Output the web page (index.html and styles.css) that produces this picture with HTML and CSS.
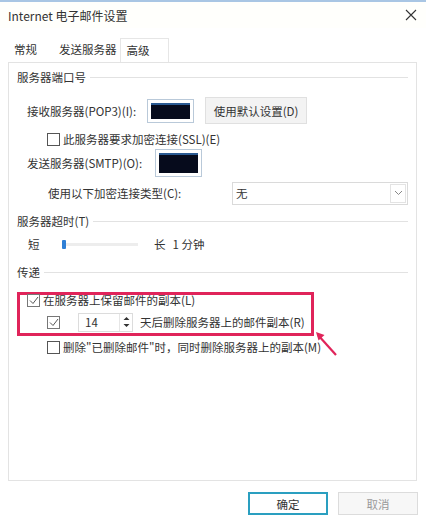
FILE: index.html
```html
<!DOCTYPE html>
<html lang="zh-CN">
<head>
    <meta charset="UTF-8">
    <title>Internet 电子邮件设置</title>
    <link rel="stylesheet" href="styles.css">
</head>
<body>
    <div class="window">
        <div class="titlebar">
            <span class="title">Internet 电子邮件设置</span>
            <svg class="close" width="12" height="12" viewBox="0 0 12 12">
                <path d="M1 1 L11 11 M11 1 L1 11" stroke="#333" stroke-width="1.1" fill="none"/>
            </svg>
        </div>

        <div class="tabs">
            <div class="tab">常规</div>
            <div class="tab">发送服务器</div>
            <div class="tab active">高级</div>
        </div>

        <div class="panel">
            <div class="group">服务器端口号</div>

            <div class="row row-pop">
                <span class="label label-pop">接收服务器(POP3)(I):</span>
                <span class="port"><span class="port-fill"></span></span>
                <button class="btn">使用默认设置(D)</button>
            </div>

            <div class="row row-ssl">
                <span class="check"></span>
                <span>此服务器要求加密连接(SSL)(E)</span>
            </div>

            <div class="row row-smtp">
                <span class="label label-smtp">发送服务器(SMTP)(O):</span>
                <span class="port port-smtp"><span class="port-fill"></span></span>
            </div>

            <div class="row row-enc">
                <span class="label label-enc">使用以下加密连接类型(C):</span>
                <div class="select">
                    <span>无</span>
                    <span class="chevron">
                        <svg width="9" height="6" viewBox="0 0 9 6"><path d="M1 1 L4.5 4.5 L8 1" stroke="#888" fill="none"/></svg>
                    </span>
                </div>
            </div>

            <div class="group group-timeout">服务器超时(T)</div>

            <div class="row row-slider">
                <span class="short">短</span>
                <div class="track"><span class="thumb"></span></div>
                <span class="long">长</span>
                <span>1 分钟</span>
            </div>

            <div class="group group-deliver">传递</div>

            <div class="highlight">
                <div class="row row-keep">
                    <span class="check checked">
                        <svg width="10" height="9" viewBox="0 0 10 9"><path d="M1 4.5 L4 7.5 L9 1" stroke="#555" fill="none"/></svg>
                    </span>
                    <span>在服务器上保留邮件的副本(L)</span>
                </div>
                <div class="row row-days">
                    <span class="check checked">
                        <svg width="10" height="9" viewBox="0 0 10 9"><path d="M1 4.5 L4 7.5 L9 1" stroke="#555" fill="none"/></svg>
                    </span>
                    <div class="spin">
                        <span class="spin-value">14</span>
                        <span class="spin-btns">
                            <svg width="7" height="14" viewBox="0 0 7 14"><path d="M0.5 5 L3.5 2 L6.5 5 Z M0.5 9 L3.5 12 L6.5 9 Z" fill="#333"/></svg>
                        </span>
                    </div>
                    <span>天后删除服务器上的邮件副本(R)</span>
                </div>
            </div>

            <div class="row row-delete">
                <span class="check"></span>
                <span>删除"已删除邮件"时，同时删除服务器上的副本(M)</span>
            </div>

            <!-- annotation arrow pointing at the box -->
            <svg class="arrow" width="24" height="26" viewBox="0 0 24 26">
                <path d="M21 24 L3 4" stroke="#e0245a" stroke-width="2.2" fill="none"/>
                <path d="M1 1 L9.5 4 L3.5 9.5 Z" fill="#e0245a"/>
            </svg>
        </div>

        <div class="footer">
            <button class="btn-dlg primary">确定</button>
            <button class="btn-dlg disabled">取消</button>
        </div>
    </div>
</body>
</html>
```

FILE: styles.css
```css
* {
    box-sizing: border-box;
}
body {
    margin: 0;
    background: #fff;
    font-family: "Noto Sans CJK SC", "Liberation Sans", sans-serif;
    font-size: 11.5px;
    color: #333;
}
.window {
    width: 426px;
    height: 521px;
    border-top: 2px solid #a9c6e4;
    background: #fff;
}
.titlebar {
    height: 26px;
    display: flex;
    align-items: center;
    justify-content: space-between;
    padding: 0 9px 0 8px;
    background: #fffffc;
}
.title {
    font-size: 12px;
    color: #333;
}
.tabs {
    display: flex;
    align-items: flex-end;
    height: 34px;
    padding-left: 8px;
}
.tab {
    height: 24px;
    line-height: 22px;
    padding: 0 6px;
    color: #333;
}
.tab + .tab {
    margin-left: 10px;
}
.tab.active {
    margin-left: -3px;
    width: 49px;
    border: 1px solid #e6e6e6;
    border-bottom: none;
    background: #fff;
}
.panel {
    position: relative;
    margin: 0 9px 0 8px;
    height: 419px;
    border: 1px solid #e3e3e3;
    padding: 5px 8px 0 8px;
}
.group {
    display: flex;
    align-items: center;
    height: 18px;
    white-space: nowrap;
}
.group::after {
    content: "";
    flex: 1;
    height: 1px;
    margin-left: 4px;
    background: #e2e2e2;
}
.row {
    display: flex;
    align-items: center;
    white-space: nowrap;
}
.row-pop {
    margin-top: 11px;
    padding-left: 10px;
    height: 27px;
}
.label {
    display: inline-block;
}
.label-pop {
    width: 120px;
}
.label-smtp {
    width: 128px;
}
.label-enc {
    width: 185px;
}
.port {
    display: inline-flex;
    width: 47px;
    height: 24px;
    padding: 3px;
    border: 1px solid #b9c9d9;
    background: #fff;
}
.port-fill {
    flex: 1;
    background: #060b1c;
    border-top: 2px solid #2a5a92;
}
.port-smtp {
    width: 47px;
    height: 28px;
}
.btn {
    margin-left: 11px;
    height: 27px;
    width: 102px;
    padding: 0;
    font: inherit;
    color: #333;
    background: #f3f3f3;
    border: 1px solid #e0e0e0;
}
.row-ssl {
    margin-top: 6px;
    padding-left: 30px;
    height: 18px;
}
.check {
    display: inline-flex;
    align-items: center;
    justify-content: center;
    width: 13px;
    height: 13px;
    margin-right: 3px;
    border: 1px solid #555;
    background: #fff;
}
.row-smtp {
    margin-top: 1px;
    padding-left: 10px;
    height: 28px;
}
.row-enc {
    margin-top: 4px;
    padding-left: 31px;
    height: 24px;
}
.select {
    display: flex;
    align-items: center;
    justify-content: space-between;
    width: 177px;
    height: 23px;
    padding-left: 3px;
    border: 1px solid #dadada;
}
.chevron {
    display: flex;
    align-items: center;
    justify-content: center;
    width: 16px;
    height: 19px;
    margin-right: 1px;
    border: 1px solid #e3e3e3;
}
.group-timeout {
    margin-top: 7px;
}
.row-slider {
    margin-top: 5px;
    height: 18px;
    padding-left: 11px;
}
.short {
    width: 12px;
}
.track {
    position: relative;
    width: 76px;
    height: 3px;
    margin-left: 22px;
    background: #ededed;
}
.thumb {
    position: absolute;
    left: 0;
    top: -3px;
    width: 4px;
    height: 9px;
    background: #2e7fd6;
    border-radius: 1px;
}
.long {
    margin-left: 16px;
    margin-right: 7px;
}
.group-deliver {
    margin-top: 10px;
}
.highlight {
    margin-top: 11px;
    width: 297px;
    height: 44px;
    border: 3px solid #e0245a;
    padding-left: 7px;
}
.row-keep {
    height: 14px;
    margin-top: -2px;
}
.checked {
    border-color: #777;
}
.row-days {
    margin-top: 5px;
    padding-left: 20px;
    height: 20px;
}
.spin {
    display: flex;
    align-items: center;
    width: 55px;
    height: 19px;
    margin-left: 15px;
    margin-right: 7px;
    border: 1px solid #dcdcdc;
}
.spin-value {
    flex: 1;
    padding-left: 6px;
}
.spin-btns {
    display: flex;
    align-items: center;
    justify-content: center;
    width: 13px;
    height: 17px;
    border-left: 1px solid #e6e6e6;
}
.row-delete {
    margin-top: 2px;
    padding-left: 30px;
    height: 18px;
}
.arrow {
    position: absolute;
    left: 306px;
    top: 268px;
}
.footer {
    display: flex;
    justify-content: flex-end;
    gap: 10px;
    padding: 11px 8px 0 0;
}
.btn-dlg {
    width: 80px;
    height: 23px;
    padding: 0;
    font: inherit;
    background: #fdfdfd;
    color: #333;
    border: 1px solid #dcdcdc;
}
.btn-dlg.primary {
    border: 2px solid #2a9fc0;
    background: #fff;
}
.btn-dlg.disabled {
    color: #9a9a9a;
    background: #f7f7f7;
}
```
